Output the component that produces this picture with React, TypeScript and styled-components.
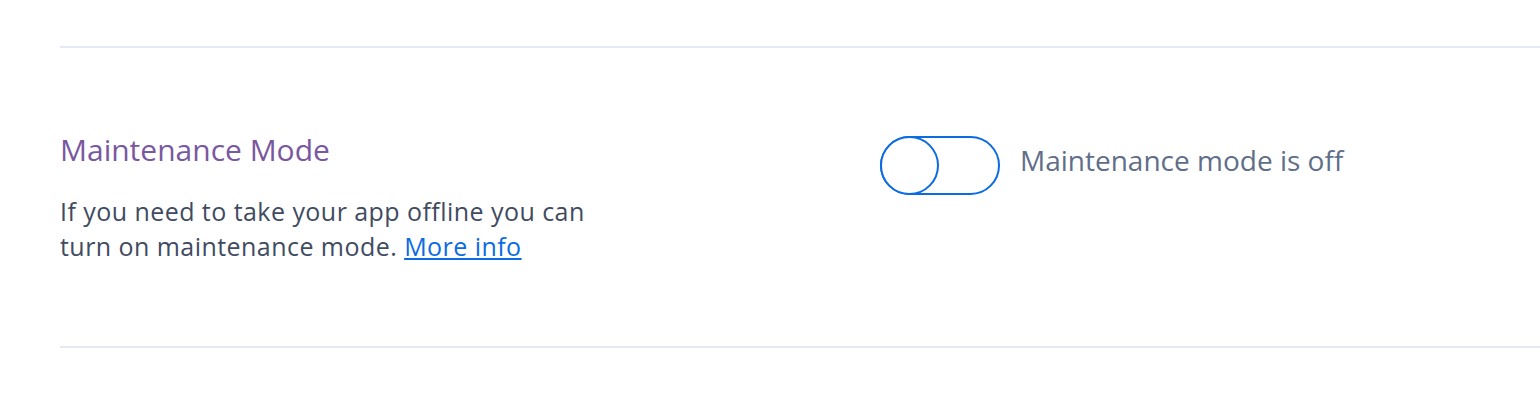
import styled, { createGlobalStyle } from 'styled-components'

const GlobalStyle = createGlobalStyle`
  html, body {
    margin: 0;
    padding: 0;
    background: #ffffff;
  }
  body {
    font-family: 'Open Sans', Lato, sans-serif;
    -webkit-font-smoothing: antialiased;
  }
`

const Page = styled.div`
  padding: 46px 0 0 60px;
`

const Section = styled.section`
  display: grid;
  grid-template-columns: 820px 1fr;
  height: 302px;
  box-sizing: border-box;
  border-top: 2px solid #e6e8f5;
  border-bottom: 2px solid #e6e8f5;
  padding-top: 83px;
`

const Info = styled.div`
  display: flex;
  flex-direction: column;
`

const Title = styled.h3`
  margin: 0 0 25px;
  font-size: 30px;
  font-weight: 400;
  line-height: 38px;
  color: #79589f;
`

const Description = styled.p`
  margin: 0;
  width: 560px;
  font-size: 25px;
  letter-spacing: 0.45px;
  line-height: 35px;
  color: #3f4b61;
`

const Link = styled.a`
  color: #0a6be3;
  text-decoration: underline;
`

const Control = styled.div`
  display: flex;
  align-items: center;
  gap: 20px;
  align-self: start;
  margin-top: 5px;
`

const Switch = styled.button<{ $on: boolean }>`
  position: relative;
  width: 120px;
  height: 59px;
  padding: 0;
  box-sizing: border-box;
  border: 2px solid #0a6be3;
  border-radius: 30px;
  background: ${p => (p.$on ? '#0a6be3' : '#ffffff')};
  cursor: pointer;
`

const Knob = styled.span<{ $on: boolean }>`
  position: absolute;
  top: -2px;
  left: ${p => (p.$on ? '59px' : '-2px')};
  width: 59px;
  height: 59px;
  box-sizing: border-box;
  border: 2px solid #0a6be3;
  border-radius: 50%;
  background: #ffffff;
`

const StatusLabel = styled.span`
  font-size: 28px;
  line-height: 38px;
  color: #5f6e89;
  margin-top: -12px;
`

export default function App() {
  const on = false
  return (
    <>
      <GlobalStyle />
      <Page>
        <Section>
          <Info>
            <Title>Maintenance Mode</Title>
            <Description>
              If you need to take your app offline you can turn on maintenance mode.{' '}
              <Link href="#">More info</Link>
            </Description>
          </Info>
          <Control>
            <Switch $on={on} aria-pressed={on}>
              <Knob $on={on} />
            </Switch>
            <StatusLabel>Maintenance mode is {on ? 'on' : 'off'}</StatusLabel>
          </Control>
        </Section>
      </Page>
    </>
  )
}
